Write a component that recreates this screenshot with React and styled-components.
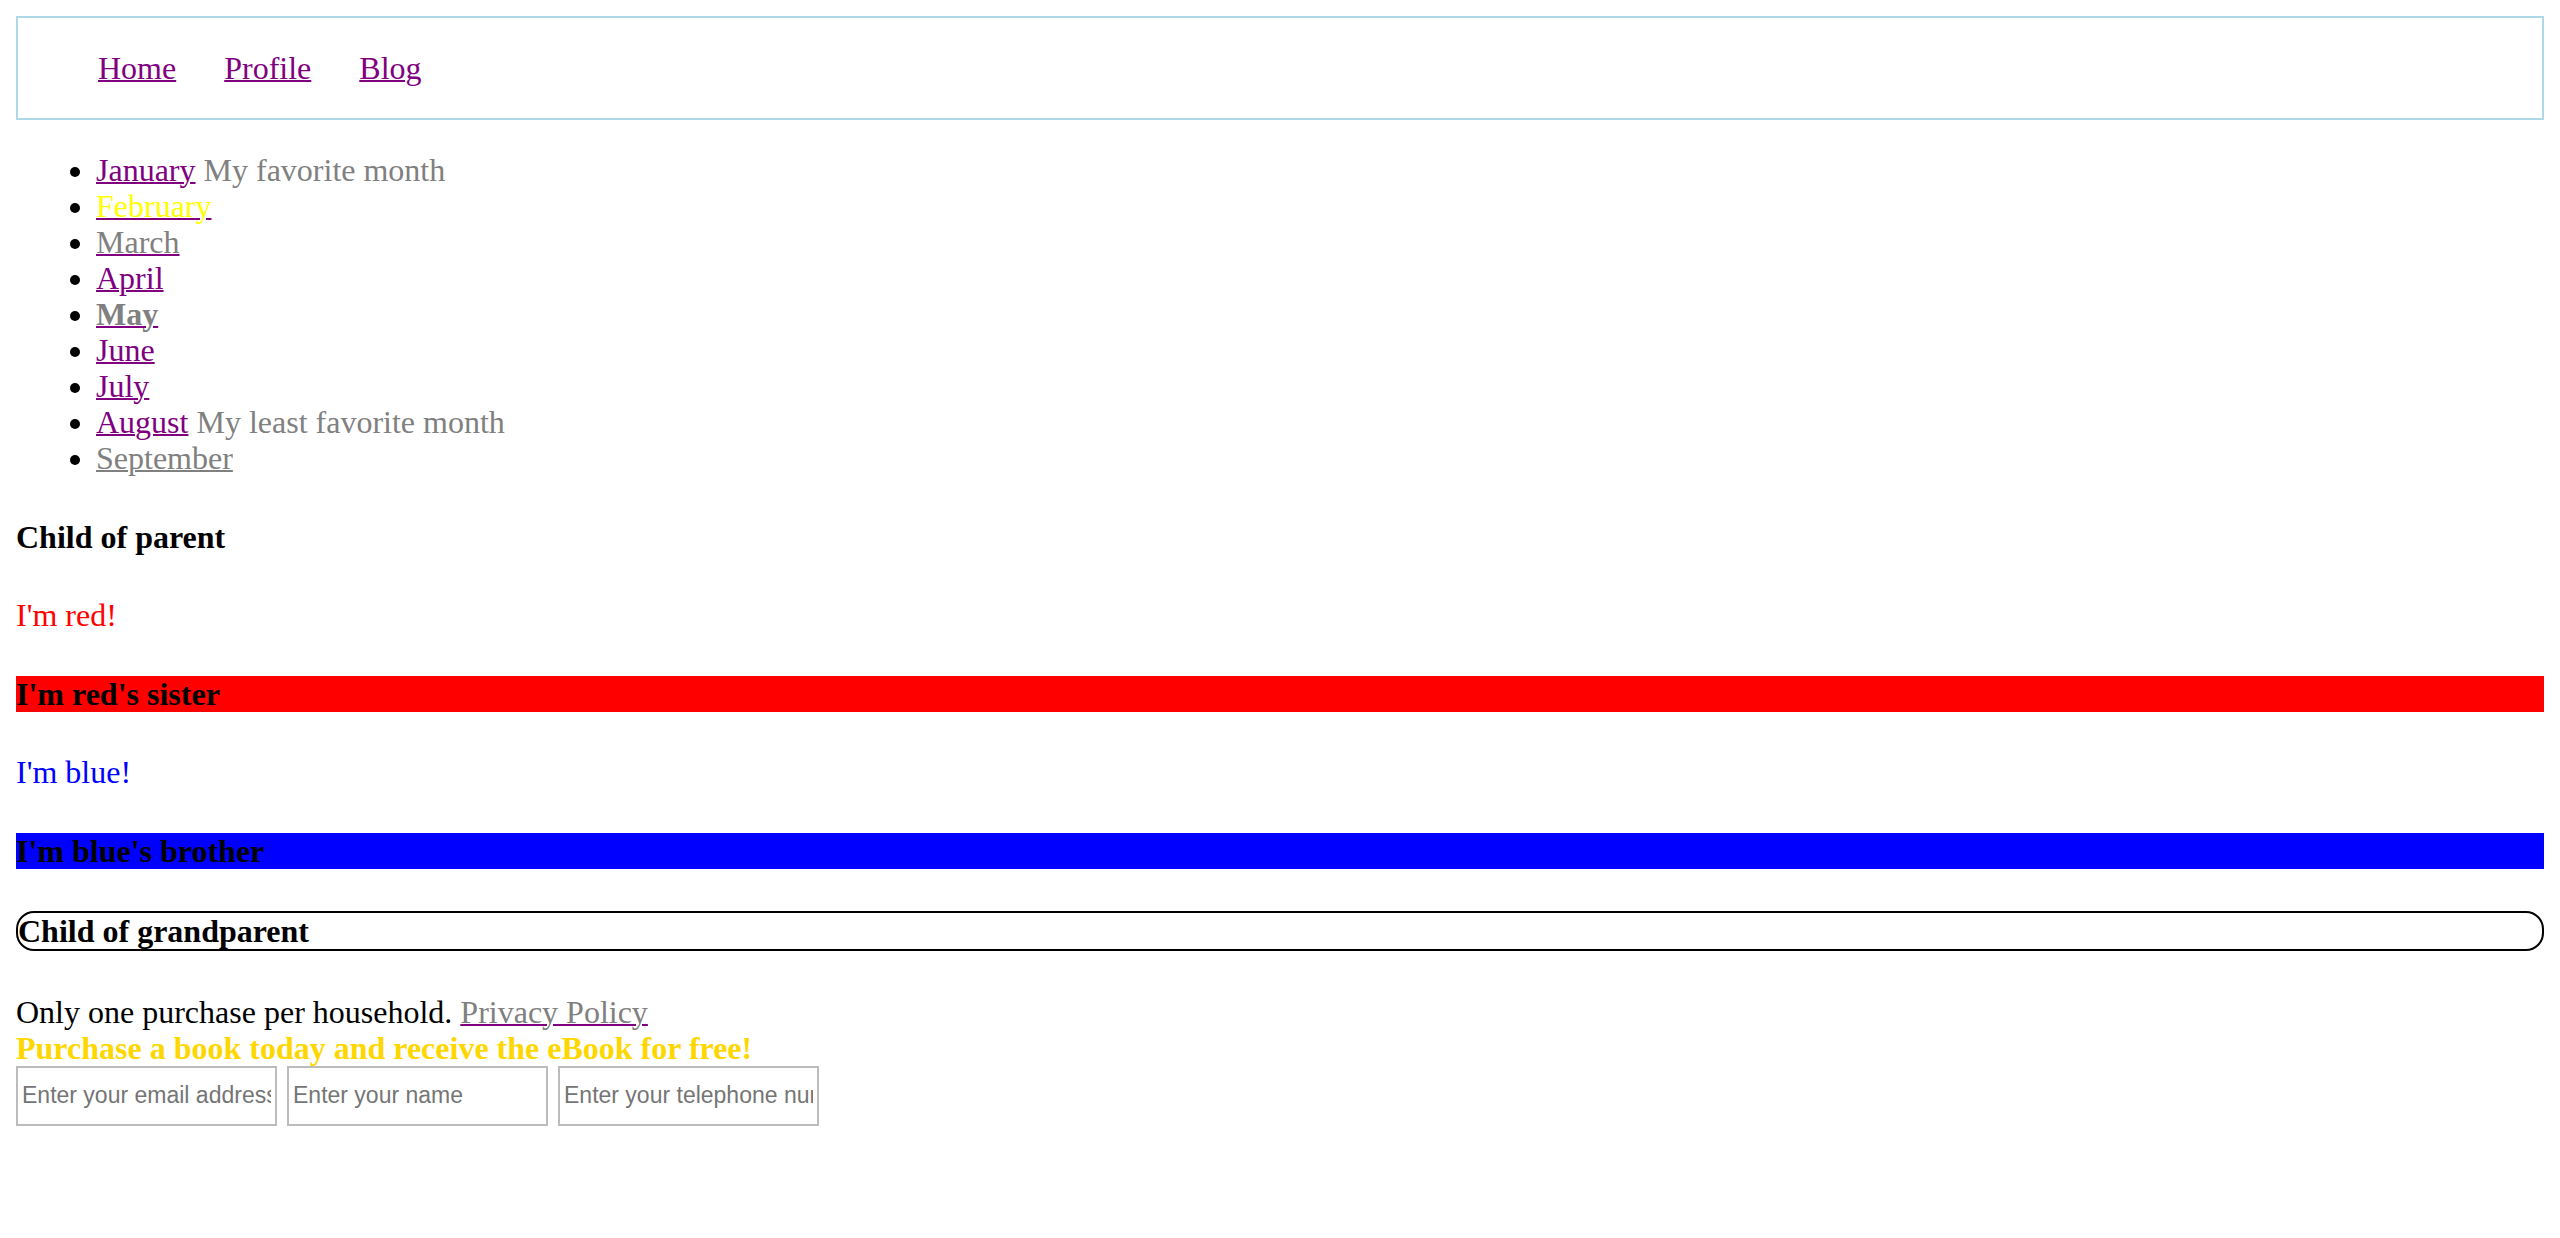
import React from "react";
import styled, { createGlobalStyle } from "styled-components";

const GlobalStyle = createGlobalStyle`
  html, body {
    background: #ffffff;
  }

  body {
    margin: 16px;
    font-family: "Liberation Serif", "Times New Roman", serif;
    font-size: 32px;
    line-height: 36px;
    color: #000000;
  }
`;

const NavBox = styled.nav`
  border: 2px solid lightblue;
`;

const NavList = styled.ul`
  display: flex;
  gap: 48px;
  margin: 32px 0;
  padding: 0 0 0 80px;
  list-style: none;
`;

const Link = styled.a`
  color: ${(props) => props.$tone || "#800080"};
  text-decoration: underline;
  text-decoration-thickness: 2px;
  cursor: pointer;
`;

const MonthList = styled.ul`
  margin: 32px 0;
  padding-left: 80px;
  list-style: disc;
`;

const Tinted = styled.span`
  color: ${(props) => props.$color || "gray"};
  font-weight: ${(props) => (props.$bold ? 700 : 400)};
`;

const Heading = styled.h4`
  margin: 42.56px 0;
  font-size: 32px;
  line-height: 36px;
  font-weight: 700;
  background: ${(props) => props.$bg || "transparent"};
`;

const PillHeading = styled(Heading)`
  border: 2px solid #000000;
  border-radius: 18px;
`;

const Para = styled.p`
  margin: 32px 0;
  color: ${(props) => props.$color || "#000000"};
`;

const FinePrint = styled.p`
  margin: 32px 0 0;
`;

const Offer = styled.div`
  color: #ffd700;
  font-weight: 700;
`;

const FieldRow = styled.div`
  display: flex;
  gap: 10px;
`;

const Field = styled.input`
  box-sizing: border-box;
  width: 261px;
  height: 60px;
  margin: 0;
  padding: 0 4px;
  border: 2px solid #bcbcbc;
  border-radius: 0;
  font-family: "Liberation Sans", Arial, sans-serif;
  font-size: 23px;
  color: #000000;
  background: #ffffff;
  outline: none;

  &::placeholder {
    color: #757575;
  }
`;

export default function App() {
  const navData = ["Home", "Profile", "Blog"];

  const fields = [
    { id: "email", type: "email", placeholder: "Enter your email address" },
    { id: "name", type: "text", placeholder: "Enter your name" },
    { id: "tel", type: "tel", placeholder: "Enter your telephone number" },
  ];

  return (
    <>
      <GlobalStyle />
      <NavBox>
        <NavList>
          {navData.map((item) => (
            <li key={item}>
              <Link>{item}</Link>
            </li>
          ))}
        </NavList>
      </NavBox>

      <MonthList>
        <li>
          <Link>January</Link> <Tinted>My favorite month</Tinted>
        </li>
        <li>
          <Link>
            <Tinted $color="yellow">February</Tinted>
          </Link>
        </li>
        <li>
          <Link>
            <Tinted>March</Tinted>
          </Link>
        </li>
        <li>
          <Link>April</Link>
        </li>
        <li>
          <Link>
            <Tinted $bold>May</Tinted>
          </Link>
        </li>
        <li>
          <Link>June</Link>
        </li>
        <li>
          <Link>July</Link>
        </li>
        <li>
          <Link>August</Link> <Tinted>My least favorite month</Tinted>
        </li>
        <li>
          <Link $tone="gray">September</Link>
        </li>
      </MonthList>

      <Heading>Child of parent</Heading>
      <Para $color="red">I'm red!</Para>
      <Heading $bg="red">I'm red's sister</Heading>
      <Para $color="blue">I'm blue!</Para>
      <Heading $bg="blue">I'm blue's brother</Heading>
      <PillHeading>Child of grandparent</PillHeading>

      <FinePrint>
        Only one purchase per household.{" "}
        <Link>
          <Tinted>Privacy Policy</Tinted>
        </Link>
      </FinePrint>
      <Offer>Purchase a book today and receive the eBook for free!</Offer>
      <FieldRow>
        {fields.map((field) => (
          <Field key={field.id} type={field.type} placeholder={field.placeholder} />
        ))}
      </FieldRow>
    </>
  );
}
